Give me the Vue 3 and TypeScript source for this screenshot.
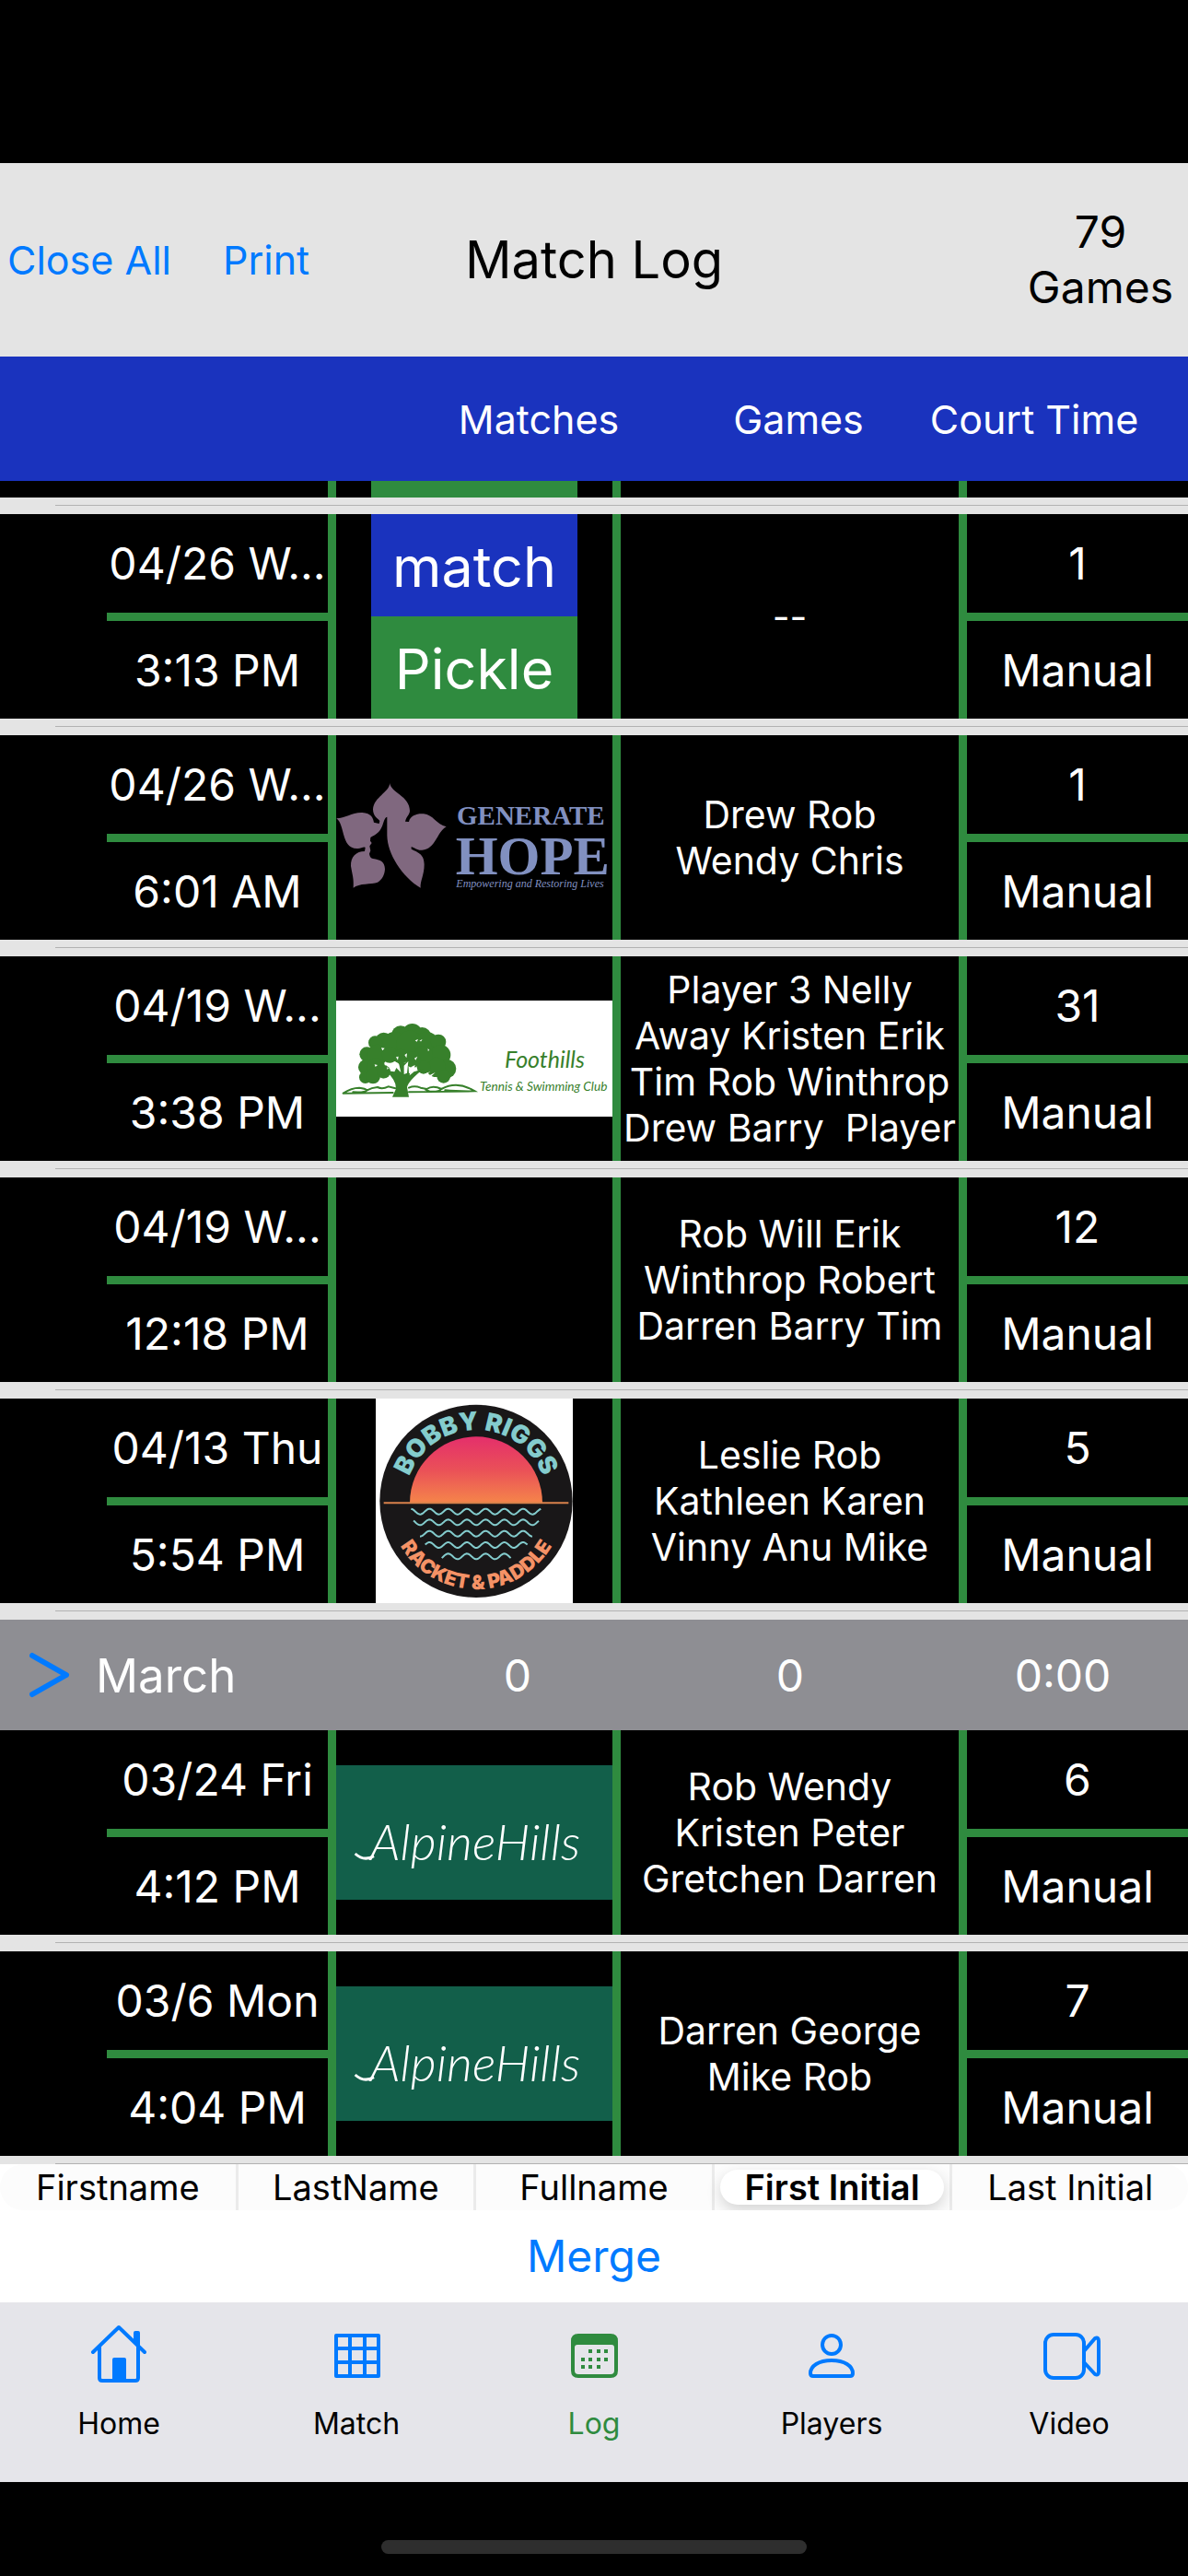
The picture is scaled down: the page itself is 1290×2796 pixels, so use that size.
<script setup lang="ts">
import { ref } from 'vue'

type Logo = 'pickle' | 'hope' | 'foothills' | 'riggs' | 'alpine' | 'none'

interface Match {
  date: string
  time: string
  logo: Logo
  players: string[]
  games: number
}

const april: Match[] = [
  { date: '04/26 W...', time: '3:13 PM', logo: 'pickle', players: ['--'], games: 1 },
  { date: '04/26 W...', time: '6:01 AM', logo: 'hope', players: ['Drew Rob', 'Wendy Chris'], games: 1 },
  {
    date: '04/19 W...',
    time: '3:38 PM',
    logo: 'foothills',
    players: ['Player 3 Nelly', 'Away Kristen Erik', 'Tim Rob Winthrop', 'Drew Barry  Player'],
    games: 31,
  },
  {
    date: '04/19 W...',
    time: '12:18 PM',
    logo: 'none',
    players: ['Rob Will Erik', 'Winthrop Robert', 'Darren Barry Tim'],
    games: 12,
  },
  {
    date: '04/13 Thu',
    time: '5:54 PM',
    logo: 'riggs',
    players: ['Leslie Rob', 'Kathleen Karen', 'Vinny Anu Mike'],
    games: 5,
  },
]

const march: Match[] = [
  {
    date: '03/24 Fri',
    time: '4:12 PM',
    logo: 'alpine',
    players: ['Rob Wendy', 'Kristen Peter', 'Gretchen Darren'],
    games: 6,
  },
  { date: '03/6 Mon', time: '4:04 PM', logo: 'alpine', players: ['Darren George', 'Mike Rob'], games: 7 },
]

const months = [
  { name: '', matches: april },
  { name: 'March', matches: march },
]

const nameStyles = ['Firstname', 'LastName', 'Fullname', 'First Initial', 'Last Initial']
const nameStyle = ref('First Initial')

const tabs = ['Home', 'Match', 'Log', 'Players', 'Video']
const activeTab = ref('Log')

// Water lines under the sunset; crests of every line share one phase.
function wave(from: number, to: number, mid: number): string {
  const points: string[] = []
  for (let x = from; x <= to; x += 3) {
    const y = mid - 9 * Math.cos((2 * Math.PI * (x - 229)) / 61)
    points.push(`${x} ${y.toFixed(1)}`)
  }
  return 'M' + points.join('L')
}

const waves = [
  wave(169, 593, 422),
  wave(177, 587, 457),
  wave(198, 565, 494),
  wave(215, 548, 531),
  wave(269, 496, 568),
]

const treeCrown: [number, number, number][] = [
  [293, 275, 32], [255, 280, 30], [325, 285, 30], [200, 300, 28], [172, 305, 22], [235, 310, 40],
  [285, 310, 44], [340, 310, 40], [378, 303, 25], [145, 343, 24], [180, 345, 34], [385, 345, 33],
  [142, 385, 25], [175, 385, 30], [405, 390, 31], [370, 385, 32], [140, 418, 20], [165, 415, 24],
  [395, 415, 22], [330, 345, 30], [220, 345, 26], [330, 385, 22], [200, 400, 22], [255, 350, 24],
  [295, 360, 26],
]
</script>

<template>
  <div class="app">
    <div class="status-area"></div>

    <header class="nav">
      <div class="nav-actions">
        <button type="button">Close All</button>
        <button type="button">Print</button>
      </div>
      <h1>Match Log</h1>
      <p class="total">79<br />Games</p>
    </header>

    <div class="totals-head">
      <span></span>
      <span>Matches</span>
      <span>Games</span>
      <span>Court Time</span>
    </div>

    <main class="log">
      <table>
        <colgroup>
          <col class="c-date" />
          <col class="c-logo" />
          <col />
          <col class="c-games" />
        </colgroup>
        <tbody>
          <tr class="peek">
            <td></td>
            <td><div class="peek-logo"></div></td>
            <td></td>
            <td></td>
          </tr>
          <tr class="gap"><td colspan="4"><hr /></td></tr>
        </tbody>
        <tbody v-for="month in months" :key="month.name">
          <tr v-if="month.name" class="month">
            <td colspan="4">
              <div class="month-row">
                <button type="button" class="month-name">
                  <svg class="chevron" viewBox="0 0 44 50" aria-hidden="true">
                    <path d="M3 4L40 25L3 46" />
                  </svg>
                  {{ month.name }}
                </button>
                <span>0</span>
                <span>0</span>
                <span>0:00</span>
              </div>
            </td>
          </tr>
          <template v-for="match in month.matches" :key="match.date + match.time">
            <tr class="match">
              <td class="date">
                <div class="half">{{ match.date }}</div>
                <div class="half">{{ match.time }}</div>
              </td>
              <td class="logo">
                <div v-if="match.logo === 'pickle'" class="pickle">
                  <div>match</div>
                  <div>Pickle</div>
                </div>

                <svg v-else-if="match.logo === 'hope'" class="wide" viewBox="45 54 900 666">
                  <path
                    fill="#80687f"
                    d="M220 210C222 240 285 252 285 300C285 312 273 320 270 335L282 336C286 315 310 308 330 310C360 312 372 345 404 352C372 370 370 425 325 428C310 430 300 420 290 417L290 425C310 435 332 440 332 475C332 510 318 530 320 551C260 515 212 440 211 380L211 320C200 322 200 345 190 360C182 375 165 382 157 387L156 398L161 405L154 415L157 430L153 440C155 450 158 454 165 456C190 460 203 465 204 490C203 508 195 525 180 533C160 540 120 535 101 551C103 520 98 510 93 480C92 450 110 432 138 432L140 420C135 415 125 424 115 423C60 425 75 345 46 325C75 325 95 305 130 306C160 307 166 325 168 338L185 342L187 333C182 325 165 320 165 295C168 255 218 240 220 210Z"
                  />
                  <g fill="#8190c0" font-family="'Liberation Serif', serif" font-weight="700">
                    <text x="438" y="345" font-size="87">GENERATE</text>
                    <text x="434" y="507" font-size="177">HOPE</text>
                    <text x="436" y="550" font-size="36" font-style="italic" font-weight="400">
                      Empowering and Restoring Lives
                    </text>
                  </g>
                </svg>

                <svg v-else-if="match.logo === 'foothills'" class="wide" viewBox="45 24 900 666">
                  <rect x="45" y="168" width="900" height="378" fill="#fff" />
                  <g fill="#37802b">
                    <circle v-for="([x, y, r], i) in treeCrown" :key="i" :cx="x" :cy="y" :r="r" />
                    <path d="M228 482L240 455Q240 425 205 395L235 400L250 370H280L282 405L330 390Q280 430 276 450L282 482Z" />
                  </g>
                  <g fill="#fff">
                    <path d="M226 372Q238 362 250 376L256 402L240 386ZM266 380L280 366L276 404L266 408ZM290 384L302 378L296 402L284 412Z" />
                    <path d="M302 298L312 294L308 302ZM316 300L326 293L322 301ZM192 322L203 323L196 331ZM268 345L276 340L274 355ZM240 352L248 350L246 362ZM170 376L180 378L173 384ZM300 356L310 350L304 362ZM344 324L349 330L344 332ZM210 385L216 388L212 393Z" />
                    <path d="M318 414L352 399L330 416ZM336 418L368 402L350 419ZM186 424L226 420L238 440L200 432Z" />
                  </g>
                  <g fill="none" stroke="#37802b" stroke-width="6" stroke-linecap="round">
                    <path d="M68 470Q95 452 120 452Q140 454 146 460Q140 468 100 466M146 460Q160 452 180 450Q195 458 215 448L238 454M282 452Q300 444 320 452L340 456Q360 442 388 456Q380 466 350 464L336 458M388 456Q440 428 497 463Q440 464 400 460M68 470L230 468M282 466L497 463" />
                  </g>
                  <g fill="#37802b" font-family="Lato, sans-serif" font-style="italic">
                    <text x="594" y="386" font-size="75">Foothills</text>
                    <text x="513" y="463" font-size="41">Tennis &amp; Swimming Club</text>
                  </g>
                </svg>

                <svg v-else-if="match.logo === 'riggs'" class="badge" viewBox="54 54 642 666">
                  <defs>
                    <linearGradient id="sunset" x1="0" y1="0" x2="0" y2="1">
                      <stop offset="0" stop-color="#e42f6b" />
                      <stop offset="0.5" stop-color="#ea5058" />
                      <stop offset="1" stop-color="#f5854a" />
                    </linearGradient>
                    <path id="arc-top" d="M149 388A232 232 0 0 1 613 388" />
                    <path id="arc-bottom" d="M94 388A287 287 0 0 0 668 388" />
                  </defs>
                  <rect x="54" y="54" width="642" height="666" fill="#fff" />
                  <circle cx="381" cy="388" r="314" fill="#191718" />
                  <path d="M165 394A216 216 0 0 1 597 394Z" fill="url(#sunset)" />
                  <path d="M80 394H682" stroke="#d9824b" stroke-width="6" />
                  <g fill="none" stroke="#84cccd" stroke-width="6">
                    <path v-for="d in waves" :key="d" :d="d" />
                  </g>
                  <g font-family="Inter, sans-serif" font-weight="900" text-anchor="middle">
                    <text fill="#84cccd" font-size="82">
                      <textPath href="#arc-top" startOffset="50%">BOBBY RIGGS</textPath>
                    </text>
                    <text fill="#f59266" font-size="64">
                      <textPath href="#arc-bottom" startOffset="50%">RACKET &amp; PADDLE</textPath>
                    </text>
                  </g>
                </svg>

                <svg v-else-if="match.logo === 'alpine'" class="wide" viewBox="45 -36 900 666">
                  <rect x="45" y="78" width="900" height="438" fill="#125f4a" />
                  <path d="M107 366Q135 392 168 374" fill="none" stroke="#fff" stroke-width="9" />
                  <text x="155" y="388" font-family="Lato, sans-serif" font-style="italic" font-weight="300" font-size="162" fill="#fff">
                    AlpineHills
                  </text>
                </svg>
              </td>
              <td class="players">{{ match.players.join('\n') }}</td>
              <td class="games">
                <div class="half">{{ match.games }}</div>
                <div class="half">Manual</div>
              </td>
            </tr>
            <tr class="gap"><td colspan="4"><hr /></td></tr>
          </template>
        </tbody>
      </table>
    </main>

    <fieldset class="segments" aria-label="Name style">
      <label v-for="style in nameStyles" :key="style" :class="{ selected: style === nameStyle }">
        <input v-model="nameStyle" type="radio" name="name-style" :value="style" />
        <span>{{ style }}</span>
      </label>
    </fieldset>

    <button type="button" class="merge">Merge</button>

    <nav class="tabs">
      <button
        v-for="tab in tabs"
        :key="tab"
        type="button"
        :class="{ active: tab === activeTab }"
        @click="activeTab = tab"
      >
        <svg v-if="tab === 'Home'" viewBox="0 0 64 64" aria-hidden="true">
          <path class="line" d="M4 30L32 3L60 30M11 24V58Q11 61 14 61H50Q53 61 53 58V24" />
          <path d="M48 20V9Q48 7 50 7H53Q55 7 55 9V26ZM25 61V38Q25 36 27 36H38Q40 36 40 38V61Z" />
        </svg>
        <svg v-else-if="tab === 'Match'" viewBox="0 0 64 64" aria-hidden="true">
          <path class="line" d="M10 12H56V56H10ZM10 26H56M10 41H56M25 12V56M41 12V56" />
        </svg>
        <svg v-else-if="tab === 'Log'" viewBox="0 0 64 64" aria-hidden="true">
          <path
            fill-rule="evenodd"
            d="M15 10H50Q58 10 58 18V50Q58 58 50 58H15Q7 58 7 50V18Q7 10 15 10ZM14 22Q11 22 11 25V50Q11 54 15 54H50Q54 54 54 50V25Q54 22 51 22Z"
          />
          <path d="M26 27h4v4h-4zM35 27h4v4h-4zM43 27h4v4h-4zM18 36h4v4h-4zM26 36h4v4h-4zM35 36h4v4h-4zM43 36h4v4h-4zM18 44h4v4h-4zM26 44h4v4h-4zM35 44h4v4h-4z" />
        </svg>
        <svg v-else-if="tab === 'Players'" viewBox="0 0 64 64" aria-hidden="true">
          <circle class="line" cx="32" cy="22" r="10" />
          <path class="line" d="M9 53C9 45 18 39 32 39S55 45 55 53Q55 56 52 56H12Q9 56 9 53Z" />
        </svg>
        <svg v-else viewBox="0 0 64 64" aria-hidden="true">
          <rect class="line" x="6" y="11" width="42" height="47" rx="9" />
          <path class="line" d="M48 29L60 15Q64 13 64 18V51Q64 56 60 54L48 41" />
        </svg>
        <span>{{ tab }}</span>
      </button>
    </nav>

    <footer class="home-area"><div class="home-indicator"></div></footer>
  </div>
</template>

<style>
body {
  margin: 0;
  background: #000;
}
</style>

<style scoped>
.app {
  display: flex;
  flex-direction: column;
  min-height: 100vh;
  background: #000;
  font-family: Inter, 'Liberation Sans', sans-serif;
}

button {
  margin: 0;
  padding: 0;
  border: 0;
  background: none;
  font: inherit;
  color: #007aff;
}

.status-area {
  height: 177px;
}

.nav {
  display: grid;
  grid-template-columns: 1fr auto 1fr;
  align-items: center;
  height: 210px;
  padding: 0 8px;
  background: #e4e4e4;
  color: #000;
}

.nav-actions {
  display: flex;
  gap: 56px;
  font-size: 43px;
}

h1 {
  margin: 0;
  font-size: 56px;
  font-weight: 400;
}

.total {
  justify-self: end;
  margin: 0 8px 0 0;
  font-size: 48px;
  line-height: 60px;
  text-align: center;
}

.totals-head {
  display: grid;
  grid-template-columns: 1fr 282px 282px 230px;
  align-items: center;
  height: 135px;
  padding-right: 52px;
  background: #1a33be;
  color: #fff;
  font-size: 43px;
  text-align: center;
  white-space: nowrap;
}

table {
  width: 100%;
  table-layout: fixed;
  border-spacing: 0;
  color: #fff;
}

.c-date {
  width: 356px;
}

.c-logo {
  width: 309px;
}

.c-games {
  width: 249px;
}

td {
  padding: 0;
}

.match td,
.peek td {
  border-left: 9px solid #2f8b3f;
}

.match td:first-child,
.peek td:first-child {
  border-left: 0;
}

.peek td {
  height: 18px;
}

.peek-logo {
  width: 224px;
  height: 18px;
  margin: 0 auto;
  background: #2f8b3f;
}

.gap td {
  height: 18px;
  background: #e4e4e4;
  vertical-align: top;
}

.log {
  margin-bottom: -9px;
}

hr {
  height: 1px;
  margin: 8px 0 0 60px;
  border: 0;
  background: #b2b2b2;
}

.date {
  padding-left: 116px;
}

.half {
  height: 106px;
  font-size: 48px;
  line-height: 108px;
  text-align: center;
  white-space: nowrap;
}

.half:first-child {
  height: 107px;
  border-bottom: 9px solid #2f8b3f;
}

.logo svg,
.pickle {
  display: block;
  height: 222px;
  margin: 0 auto;
}

.wide {
  width: 300px;
}

.badge {
  width: 214px;
}

.pickle {
  width: 224px;
  font-size: 61px;
  line-height: 114px;
  text-align: center;
}

.pickle div {
  height: 111px;
  background: #1a33be;
}

.pickle div + div {
  background: #2f8b3f;
}

.players {
  font-size: 41px;
  line-height: 50px;
  text-align: center;
  white-space: pre;
}

.month-row {
  display: grid;
  grid-template-columns: 1fr repeat(3, 240px);
  column-gap: 56px;
  align-items: center;
  height: 120px;
  padding: 0 16px 0 32px;
  background: #8e8e93;
  font-size: 48px;
  text-align: center;
}

.month-name {
  display: flex;
  align-items: center;
  gap: 28px;
  color: #fff;
  font-size: 51px;
}

.chevron {
  width: 44px;
  height: 50px;
  fill: none;
  stroke: #007aff;
  stroke-width: 6;
  stroke-linecap: round;
  stroke-linejoin: round;
}

.segments {
  position: relative;
  display: flex;
  height: 50px;
  min-width: 0;
  margin: 0;
  padding: 0;
  border: 0;
  background: #fff;
  overflow: hidden;
}

.segments label {
  display: flex;
  flex: 1;
  align-items: center;
  justify-content: center;
  border-right: 3px solid #ebebeb;
  background: #fcfcfc;
  color: #000;
  font-size: 38px;
  white-space: nowrap;
}

.segments label:first-child {
  border-radius: 26px 0 0 26px;
}

.segments label:last-child {
  border-right: 0;
  border-radius: 0 26px 26px 0;
}

.segments input {
  position: absolute;
  opacity: 0;
}

.segments span {
  width: 243px;
  line-height: 38px;
  border-radius: 20px;
  text-align: center;
}

.segments .selected span {
  background: #fff;
  box-shadow: 0 6px 16px rgba(0, 0, 0, 0.16);
  font-weight: 600;
}

.merge {
  height: 100px;
  padding-bottom: 2px;
  background: #fff;
  font-size: 48px;
}

.tabs {
  display: flex;
  height: 195px;
  background: #e5e5ea;
}

.tabs button {
  display: flex;
  flex: 1;
  flex-direction: column;
  align-items: center;
  gap: 24px;
  padding-top: 24px;
}

.tabs svg {
  width: 64px;
  height: 64px;
  fill: #007aff;
  overflow: visible;
}

.tabs .line {
  fill: none;
  stroke: #007aff;
  stroke-width: 4;
  stroke-linecap: round;
  stroke-linejoin: round;
}

.tabs span {
  color: #000;
  font-size: 32px;
  line-height: 40px;
}

.tabs .active svg {
  fill: #2f8b3f;
}

.tabs .active span {
  color: #2f8b3f;
}

.home-area {
  flex: 1;
  padding: 63px 0 24px;
}

.home-indicator {
  width: 462px;
  height: 15px;
  margin: 0 auto;
  border-radius: 8px;
  background: #2e2e2e;
}
</style>
